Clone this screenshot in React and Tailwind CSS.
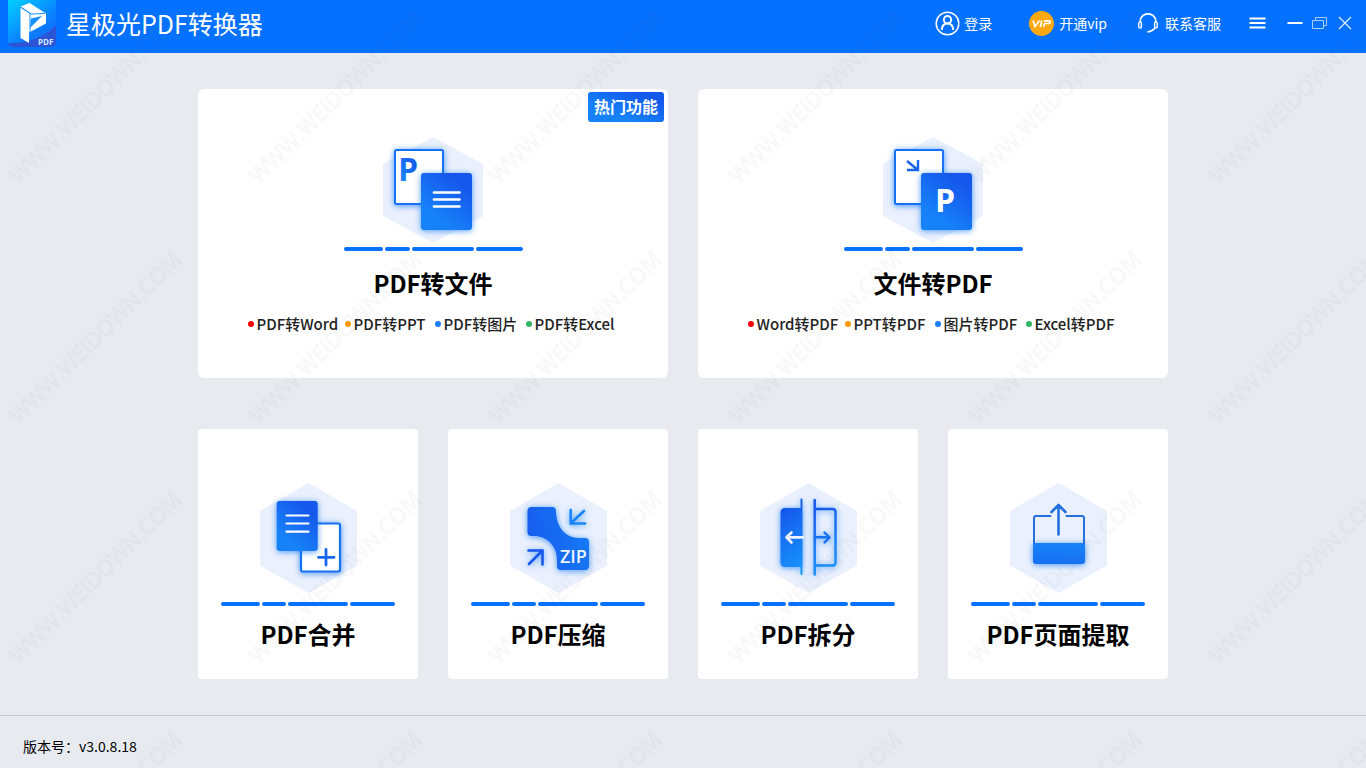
import React from "react";

const toFileFormats = ["PDF转Word", "PDF转PPT", "PDF转图片", "PDF转Excel"];
const toPdfFormats = ["Word转PDF", "PPT转PDF", "图片转PDF", "Excel转PDF"];
const dotColors = ["bg-[#fb0007]", "bg-[#ff9a05]", "bg-[#1a7ffb]", "bg-[#30b566]"];

const SvgDefs = () => (
  <svg width="0" height="0" className="absolute" aria-hidden="true">
    <defs>
      <linearGradient id="blue" x1="0.1" y1="1" x2="0.8" y2="0">
        <stop offset="0" stopColor="#1782f8" />
        <stop offset="0.25" stopColor="#1781f8" />
        <stop offset="0.85" stopColor="#1459ec" />
        <stop offset="1" stopColor="#1459ec" />
      </linearGradient>
      <linearGradient id="blueDown" x1="0.3" y1="0" x2="0.5" y2="1">
        <stop offset="0" stopColor="#1551ea" />
        <stop offset="1" stopColor="#1494fb" />
      </linearGradient>
      <linearGradient id="blueSide" x1="0" y1="0.6" x2="1" y2="0.3">
        <stop offset="0" stopColor="#155bec" />
        <stop offset="1" stopColor="#167cf6" />
      </linearGradient>
      <linearGradient id="blueTray" x1="0" y1="1" x2="0.1" y2="0">
        <stop offset="0" stopColor="#156ff2" />
        <stop offset="1" stopColor="#1882f9" />
      </linearGradient>
      <filter id="glow" x="-30%" y="-30%" width="160%" height="160%">
        <feDropShadow dx="0" dy="1" stdDeviation="3" floodColor="#1671f5" floodOpacity="0.7" />
      </filter>
    </defs>
  </svg>
);

// Large card artwork
const LargeIcon = ({ children }) => (
  <svg width="100" height="106" viewBox="0 0 100 106" className="overflow-visible" aria-hidden="true">
    <path d="M50 0 100 27V79L50 106 0 79V27Z" fill="#eaf0fd" />
    <rect x="12" y="13" width="48" height="54" rx="1.5" fill="#fff" stroke="#1672f3" strokeWidth="2" filter="url(#glow)" />
    <rect x="38" y="36" width="51" height="57" rx="3" fill="url(#blue)" filter="url(#glow)" />
    {children}
  </svg>
);

const ToFileIcon = () => (
  <LargeIcon>
    <text x="15" y="44" fontSize="32" className="font-['Open_Sans',sans-serif] font-bold" fill="url(#blue)">P</text>
    <path d="M51 55.5H76.5M51 62.5H76.5M51 69.5H76.5" stroke="#fff" strokeWidth="2.7" strokeLinecap="round" />
  </LargeIcon>
);

const ToPdfIcon = () => (
  <LargeIcon>
    <path d="M24 24 35 33M35 23V33H24" fill="none" stroke="#1565ef" strokeWidth="2.4" />
    <text x="52" y="75" fontSize="32" className="font-['Open_Sans',sans-serif] font-bold" fill="#fff">P</text>
  </LargeIcon>
);

// Small card artwork
const SmallIcon = ({ children }) => (
  <svg width="97" height="110" viewBox="0 0 97 110" className="overflow-visible" aria-hidden="true">
    <path d="M48.5 0 97 28V82.5L48.5 110 0 82.5V28Z" fill="#eaf0fd" />
    {children}
  </svg>
);

const MergeIcon = () => (
  <SmallIcon>
    <rect x="41" y="40.5" width="39" height="48" rx="2" fill="#fff" stroke="#1672f3" strokeWidth="2.2" filter="url(#glow)" />
    <rect x="16.7" y="18" width="41" height="50" rx="3" fill="url(#blue)" filter="url(#glow)" />
    <path d="M26.5 32.5H48.5M26.5 40.5H48.5M26.5 48.7H48.5" stroke="#fff" strokeWidth="2.2" strokeLinecap="round" />
    <path d="M66 66.5V82M58.5 74.3H74" stroke="#1667f0" strokeWidth="2.8" strokeLinecap="round" />
  </SmallIcon>
);

const CompressIcon = () => (
  <SmallIcon>
    <g filter="url(#glow)">
      <path
        d="M21.5 24H42q4 0 4 4C46 43 55 55 69 55h6q4 0 4 4v24q0 4-4 4H51q-4 0-4-4V77C47 63 37 53 24 53h-2.5q-4 0-4-4V28q0-4 4-4Z"
        fill="url(#blueSide)"
      />
      <path d="M60.7 27V40.5H75M61 40 74 28" fill="none" stroke="#1785fa" strokeWidth="2.6" strokeLinecap="round" />
      <path d="M18.5 67.5H32.5V81.5M32 68 19 81" fill="none" stroke="#1656ed" strokeWidth="2.6" strokeLinecap="round" />
    </g>
    <text x="50" y="80" fontSize="18" className="font-['Open_Sans',sans-serif] font-semibold" fill="#eef4ff">ZIP</text>
  </SmallIcon>
);

const SplitIcon = () => (
  <SmallIcon>
    <g filter="url(#glow)">
      <path d="M40.5 16.5q0-1 1-1t1 1V91q0 1-1 1t-1-1V84H25q-4.5 0-4.5-4.5V29.5Q20.5 25 25 25H40.5Z" fill="url(#blueDown)" />
      <path
        d="M54.7 17V91.5M55 26H72.5q3 0 3 3V79.5q0 3-3 3H55"
        fill="none"
        stroke="url(#blueDown)"
        strokeWidth="2.4"
        strokeLinecap="round"
      />
      <path d="M56 54.3H69M64.5 49.5 69.5 54.3 64.5 59.5" fill="none" stroke="#1570f3" strokeWidth="2.4" strokeLinecap="round" strokeLinejoin="round" />
    </g>
    <path d="M43 54.3H27M31.5 49.5 26.5 54.3 31.5 59.5" fill="none" stroke="#eaf0fd" strokeWidth="2.7" strokeLinejoin="round" strokeLinecap="round" />
  </SmallIcon>
);

const ExtractIcon = () => (
  <SmallIcon>
    <path d="M23 60H75V78q0 3-3 3H26q-3 0-3-3Z" fill="url(#blueTray)" filter="url(#glow)" />
    <path d="M40.5 33H26q-2 0-2 2V60M56.5 33H72q2 0 2 2V60" fill="none" stroke="#2370dd" strokeWidth="2" strokeLinecap="round" />
    <path d="M48.5 51.5V22.5M41.5 29 48.5 22 55.5 29" fill="none" stroke="#2370dd" strokeWidth="2.6" strokeLinecap="round" strokeLinejoin="round" />
  </SmallIcon>
);

const tools = [
  { label: "PDF合并", Icon: MergeIcon },
  { label: "PDF压缩", Icon: CompressIcon },
  { label: "PDF拆分", Icon: SplitIcon },
  { label: "PDF页面提取", Icon: ExtractIcon },
];

const Divider = () => (
  <div className="flex h-1 w-full gap-[2px]">
    <span className="grow-[40] rounded-full bg-[#0571ff]" />
    <span className="grow-[25] rounded-full bg-[#0571ff]" />
    <span className="grow-[62] rounded-full bg-[#0571ff]" />
    <span className="grow-[47] rounded-full bg-[#0571ff]" />
  </div>
);

const LargeCard = ({ title, formats, Icon, hot }) => (
  <button
    type="button"
    className="relative col-span-2 flex flex-col items-center rounded-md bg-white pt-12 pb-11 cursor-pointer"
  >
    {hot && (
      <span className="absolute top-[3px] right-1 flex h-[30px] w-19 items-center justify-center rounded-[3px] bg-linear-to-tr from-[#1782f8] from-30% to-[#1459ec] to-80% pb-[2px] text-base font-bold text-white">
        热门功能
      </span>
    )}
    <Icon />
    <div className="mt-1 w-[179px]">
      <Divider />
    </div>
    <h2 className="mt-[14px] text-2xl leading-9 font-bold text-black">{title}</h2>
    <ul className="mt-[13px] grid grid-cols-[97px_90px_91px_93px] text-[15px] leading-5 font-medium text-[#222]">
      {formats.map((name, i) => (
        <li key={name} className="flex items-center gap-[3px] whitespace-nowrap">
          <span className={`size-[6px] rounded-full ${dotColors[i]}`} />
          {name}
        </li>
      ))}
    </ul>
  </button>
);

const SmallCard = ({ label, Icon }) => (
  <button type="button" className="flex flex-col items-center rounded-[4px] bg-white pt-[54px] pb-[27px] cursor-pointer">
    <Icon />
    <div className="mt-[9px] w-[174px]">
      <Divider />
    </div>
    <h2 className="mt-[10px] text-2xl leading-9 font-bold text-black">{label}</h2>
  </button>
);

const Logo = () => (
  <svg width="48" height="48" viewBox="0 0 48 48" aria-hidden="true">
    <defs>
      <linearGradient id="logoBg" x1="0" y1="0" x2="0.8" y2="1">
        <stop offset="0" stopColor="#00d2ff" />
        <stop offset="0.6" stopColor="#0a84ff" />
        <stop offset="1" stopColor="#1466f5" />
      </linearGradient>
    </defs>
    <path d="M0 0H48V41q0 6-6 6H6q-6 0-6-6Z" fill="url(#logoBg)" />
    <path d="M0 43Q28 44 48 26V41q0 6-6 6H6q-5 0-6-4Z" fill="#2b55d4" />
    <path d="M12.500 6.500 21.500 3 38 13.500V23.500L21 32.500V43L12.500 38Z" fill="#fff" />
    <path d="M12.500 7 23 14 37 13.500" fill="none" stroke="#1590ff" strokeWidth="1.200" />
    <path d="M23 18.500 34 16 22 28Z" fill="#1590ff" />
    <path d="M22 14V32" stroke="#1590ff" strokeWidth="1" />
    <text x="30" y="45" fontSize="8" className="font-['Open_Sans',sans-serif] font-bold" fill="#dbe8ff">PDF</text>
  </svg>
);

const UserIcon = () => (
  <svg width="25" height="25" viewBox="0 0 25 25" fill="none" stroke="#fff" strokeWidth="1.5" aria-hidden="true">
    <circle cx="12.5" cy="12.5" r="11.3" />
    <circle cx="12.5" cy="8.8" r="3.7" strokeWidth="2" />
    <path d="M6.8 19C7 14.5 9 12.5 12.5 12.5S18 14.5 18.2 19" strokeWidth="2" />
  </svg>
);

const VipIcon = () => (
  <svg width="25" height="25" viewBox="0 0 25 25" aria-hidden="true">
    <circle cx="12.5" cy="12.5" r="12.5" fill="#ffa912" />
    <path
      d="M4 9.5 6 15.5 10.5 9.5M12.8 9.5 11.3 16M14.5 16 15.5 12.5H19.5Q21 12.5 21.3 11 21.5 9.8 20 9.8H15"
      fill="none"
      stroke="#fff"
      strokeWidth="1.7"
    />
  </svg>
);

const HeadsetIcon = () => (
  <svg width="20" height="20" viewBox="0 0 20 20" fill="none" stroke="#fff" strokeWidth="1.7" strokeLinecap="round" aria-hidden="true">
    <path d="M2.300 9V8A7.700 7.200 0 0 1 17.700 8V9" />
    <rect x="0.8" y="9" width="2.600" height="6" rx="1.300" strokeWidth="1.400" />
    <rect x="16.600" y="9" width="2.600" height="6" rx="1.300" strokeWidth="1.400" />
    <path d="M16.500 15.500Q14 18.600 10 18.800" />
  </svg>
);

const Header = () => (
  <header className="flex h-[53px] items-start justify-between bg-[#0571ff] pl-2 pr-[14px] text-white">
    <div className="flex gap-[10px]">
      <Logo />
      <h1 className="text-[25px] leading-[46px] font-normal">星极光PDF转换器</h1>
    </div>
    <nav className="flex h-[46px] items-center text-sm">
      <button type="button" className="flex items-center gap-1 cursor-pointer">
        <UserIcon />
        登录
      </button>
      <button type="button" className="ml-[37px] flex items-center gap-[5px] cursor-pointer">
        <VipIcon />
        开通vip
      </button>
      <button type="button" className="ml-[31px] flex items-center gap-[7px] cursor-pointer">
        <HeadsetIcon />
        联系客服
      </button>
      <button type="button" aria-label="菜单" className="ml-7 cursor-pointer">
        <svg width="17" height="12" viewBox="0 0 17 12" stroke="#fff" strokeWidth="2">
          <path d="M.5 1.5H16.5M.5 6H16.5M.5 10.5H16.5" />
        </svg>
      </button>
      <button type="button" aria-label="最小化" className="ml-[21px] cursor-pointer">
        <svg width="16" height="12" viewBox="0 0 16 12" stroke="#fff" strokeWidth="2">
          <path d="M.5 6H15.5" />
        </svg>
      </button>
      <button type="button" aria-label="还原" className="ml-[9px] cursor-pointer">
        <svg width="16" height="12" viewBox="0 0 16 12" fill="none" stroke="#a9cdff">
          <path d="M.5 3.5H11.5V11.5H.5ZM3.5 3.5V.5H14.5V8.5H11.5" />
        </svg>
      </button>
      <button type="button" aria-label="关闭" className="ml-[10px] cursor-pointer">
        <svg width="14" height="14" viewBox="0 0 14 14" stroke="#e3eeff" strokeWidth="1.2">
          <path d="M1 1 13 13M13 1 1 13" />
        </svg>
      </button>
    </nav>
  </header>
);

// Repeating outline text laid over the whole window
const Watermark = () => (
  <svg className="pointer-events-none absolute inset-0 size-full" aria-hidden="true">
    <defs>
      <pattern id="watermark" width="240" height="240" patternUnits="userSpaceOnUse">
        <text
          transform="translate(19 185) rotate(-45)"
          fontSize="22"
          className="font-['Open_Sans',sans-serif]"
          fill="none"
          stroke="#555"
          strokeOpacity="0.07"
          strokeWidth="0.8"
        >
          WWW.WEIDOWN.COM
        </text>
      </pattern>
    </defs>
    <rect width="100%" height="100%" fill="url(#watermark)" />
  </svg>
);

const App = () => {
  return (
    <div className="relative flex min-h-screen flex-col bg-[#e7ebf0] font-['Noto_Sans_CJK_SC',sans-serif]">
      <SvgDefs />
      <Header />

      <main className="mx-auto w-full max-w-[970px] grow pt-9 pb-[35px]">
        <div className="grid grid-cols-4 gap-x-[30px] gap-y-[51px]">
          <LargeCard title="PDF转文件" formats={toFileFormats} Icon={ToFileIcon} hot />
          <LargeCard title="文件转PDF" formats={toPdfFormats} Icon={ToPdfIcon} />
          {tools.map((tool) => (
            <SmallCard key={tool.label} {...tool} />
          ))}
        </div>
      </main>

      <footer className="border-t border-[#c5cacf] px-[23px] pt-5 pb-3 text-sm leading-5 text-black">
        <p>版本号：v3.0.8.18</p>
      </footer>
      <Watermark />
    </div>
  );
};

export default App;
